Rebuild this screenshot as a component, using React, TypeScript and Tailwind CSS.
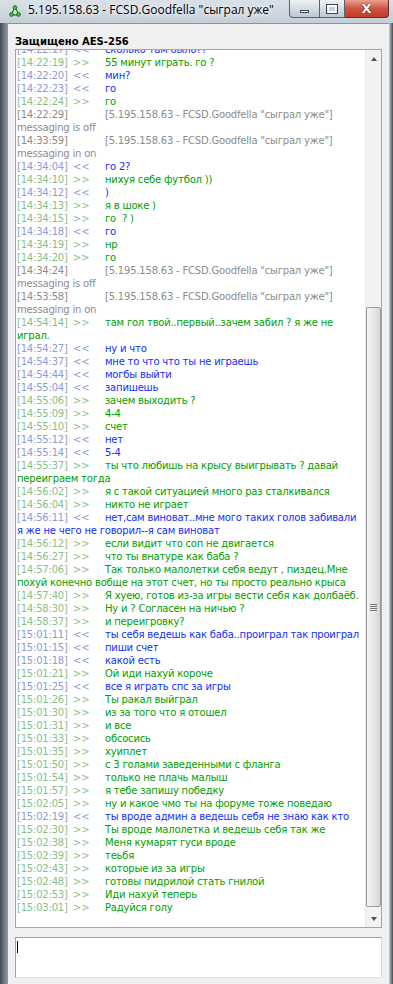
import React from 'react';

type Dir = 'in' | 'out' | 'sys';

interface Row {
  t: string;
  d: Dir;
  m: string;
  m2?: string;
}

const SYS = '[5.195.158.63 - FCSD.Goodfella "сыграл уже"]';

const rows: Row[] = [
  { t: '14:22:17', d: 'in', m: 'сколько там было??' },
  { t: '14:22:19', d: 'out', m: '55 минут играть. го ?' },
  { t: '14:22:20', d: 'in', m: 'мин?' },
  { t: '14:22:23', d: 'in', m: 'го' },
  { t: '14:22:24', d: 'out', m: 'го' },
  { t: '14:22:29', d: 'sys', m: SYS, m2: 'messaging is off' },
  { t: '14:33:59', d: 'sys', m: SYS, m2: 'messaging in on' },
  { t: '14:34:04', d: 'in', m: 'го 2?' },
  { t: '14:34:10', d: 'out', m: 'нихуя себе футбол ))' },
  { t: '14:34:12', d: 'in', m: ')' },
  { t: '14:34:13', d: 'out', m: 'я в шоке )' },
  { t: '14:34:15', d: 'out', m: 'го  ? )' },
  { t: '14:34:18', d: 'in', m: 'го' },
  { t: '14:34:19', d: 'out', m: 'нр' },
  { t: '14:34:20', d: 'out', m: 'го' },
  { t: '14:34:24', d: 'sys', m: SYS, m2: 'messaging is off' },
  { t: '14:53:58', d: 'sys', m: SYS, m2: 'messaging in on' },
  { t: '14:54:14', d: 'out', m: 'там гол твой..первый..зачем забил ? я же не', m2: 'играл.' },
  { t: '14:54:27', d: 'in', m: 'ну и что' },
  { t: '14:54:37', d: 'in', m: 'мне то что что ты не играешь' },
  { t: '14:54:44', d: 'in', m: 'могбы выйти' },
  { t: '14:55:04', d: 'in', m: 'запишешь' },
  { t: '14:55:06', d: 'out', m: 'зачем выходить ?' },
  { t: '14:55:09', d: 'out', m: '4-4' },
  { t: '14:55:10', d: 'out', m: 'счет' },
  { t: '14:55:12', d: 'in', m: 'нет' },
  { t: '14:55:14', d: 'in', m: '5-4' },
  { t: '14:55:37', d: 'out', m: 'ты что любишь на крысу выигрывать ? давай', m2: 'переиграем тогда' },
  { t: '14:56:02', d: 'out', m: 'я с такой ситуацией много раз сталкивался' },
  { t: '14:56:04', d: 'out', m: 'никто не играет' },
  { t: '14:56:11', d: 'in', m: 'нет,сам виноват..мне мого таких голов забивали', m2: 'я же не чего не говорил--я сам виноват' },
  { t: '14:56:12', d: 'out', m: 'если видит что соп не двигается' },
  { t: '14:56:27', d: 'out', m: 'что ты внатуре как баба ?' },
  { t: '14:57:06', d: 'out', m: 'Так только малолетки себя ведут , пиздец.Мне', m2: 'похуй конечно вобще на этот счет, но ты просто реально крыса' },
  { t: '14:57:40', d: 'out', m: 'Я хуею, готов из-за игры вести себя как долбаёб.' },
  { t: '14:58:30', d: 'out', m: 'Ну и ? Согласен на ничью ?' },
  { t: '14:58:37', d: 'out', m: 'и переигровку?' },
  { t: '15:01:11', d: 'in', m: 'ты себя ведешь как баба..проиграл так проиграл' },
  { t: '15:01:15', d: 'in', m: 'пиши счет' },
  { t: '15:01:18', d: 'in', m: 'какой есть' },
  { t: '15:01:21', d: 'out', m: 'Ой иди нахуй короче' },
  { t: '15:01:25', d: 'in', m: 'все я играть спс за игры' },
  { t: '15:01:26', d: 'out', m: 'Ты ракал выйграл' },
  { t: '15:01:30', d: 'out', m: 'из за того что я отошел' },
  { t: '15:01:31', d: 'out', m: 'и все' },
  { t: '15:01:33', d: 'out', m: 'обсосись' },
  { t: '15:01:35', d: 'out', m: 'хуиплет' },
  { t: '15:01:50', d: 'out', m: 'с 3 голами заведенными с фланга' },
  { t: '15:01:54', d: 'out', m: 'только не плачь малыш' },
  { t: '15:01:57', d: 'out', m: 'я тебе запишу победку' },
  { t: '15:02:05', d: 'out', m: 'ну и какое чмо ты на форуме тоже поведаю' },
  { t: '15:02:19', d: 'in', m: 'ты вроде админ а ведешь себя не знаю как кто' },
  { t: '15:02:30', d: 'out', m: 'Ты вроде малолетка и ведешь себя так же' },
  { t: '15:02:38', d: 'out', m: 'Меня кумарят гуси вроде' },
  { t: '15:02:39', d: 'out', m: 'теьбя' },
  { t: '15:02:43', d: 'out', m: 'которые из за игры' },
  { t: '15:02:48', d: 'out', m: 'готовы пидрилой стать гнилой' },
  { t: '15:02:53', d: 'out', m: 'Иди нахуй теперь' },
  { t: '15:03:01', d: 'out', m: 'Радуйся голу' },
];

function LogRow({ row }: { row: Row }) {
  if (row.d === 'sys') {
    return (
      <div className="text-[#8c8c8c]">
        <span className="inline-block w-[88px]">[{row.t}]</span>
        {row.m}
        {row.m2 && (
          <>
            <br />
            {row.m2}
          </>
        )}
      </div>
    );
  }
  const out = row.d === 'out';
  return (
    <div className={out ? 'text-[#00a000]' : 'text-[#1030ff]'}>
      <span className={'inline-block w-[56px] ' + (out ? 'text-[#88bf88]' : 'text-[#8e9cd2]')}>[{row.t}]</span>
      <span className={'inline-block w-[32px] ' + (out ? 'text-[#88bf88]' : 'text-[#8e9cd2]')}>
        {out ? '>>' : '<<'}
      </span>
      {row.m}
      {row.m2 && (
        <>
          <br />
          {row.m2}
        </>
      )}
    </div>
  );
}

function AppIcon() {
  return (
    <svg width="12" height="12" viewBox="0 0 12 12">
      <path d="M6 2 L2 10 L10 10 Z" fill="none" stroke="#2b3a2b" strokeWidth="1" />
      <circle cx="6" cy="2.5" r="2" fill="#22c322" stroke="#0b6d0b" strokeWidth="0.6" />
      <circle cx="2.5" cy="9.5" r="2" fill="#22c322" stroke="#0b6d0b" strokeWidth="0.6" />
      <circle cx="9.5" cy="9.5" r="2" fill="#22c322" stroke="#0b6d0b" strokeWidth="0.6" />
    </svg>
  );
}

function CaptionButtons() {
  return (
    <div className="flex h-[18px] self-start">
      <div className="w-[31px] h-full rounded-bl-[4px] border border-t-0 border-[#5b636c] bg-gradient-to-b from-[#eef2f6] via-[#d5dde5] to-[#bcc7d2] flex items-center justify-center">
        <div className="w-[9px] h-[3px] mt-[5px] bg-white border border-[#3c4650]" />
      </div>
      <div className="w-[25px] h-full border-b border-r border-[#5b636c] bg-gradient-to-b from-[#eef2f6] via-[#d5dde5] to-[#bcc7d2] flex items-center justify-center">
        <div className="w-[10px] h-[8px] border-[2px] border-white outline outline-1 outline-[#3c4650] bg-[#c6ced6]" />
      </div>
      <div className="w-[44px] h-full rounded-br-[4px] border-b border-r border-[#5b3030] bg-gradient-to-b from-[#e8a090] via-[#d0533f] to-[#c23a2a] flex items-center justify-center">
        <span className="text-white text-[13px] font-bold leading-none [text-shadow:0_0_1px_#3a1010,0_0_1px_#3a1010] font-['DejaVu_Sans',sans-serif]">
          X
        </span>
      </div>
    </div>
  );
}

function ScrollBar() {
  return (
    <div className="w-[16px] flex flex-col bg-[#f2f2f2] border-l border-[#e9e9e9]">
      <div className="h-[17px] flex items-center justify-center">
        <div className="w-0 h-0 border-l-[3.5px] border-r-[3.5px] border-b-[4px] border-l-transparent border-r-transparent border-b-[#505050]" />
      </div>
      <div className="flex-1 flex flex-col">
        <div className="h-[240px]" />
        <div className="h-[600px] rounded-[2px] border border-[#9a9a9a] bg-gradient-to-r from-[#f4f4f4] via-[#e8e8e8] to-[#d6d6d6] flex items-center justify-center">
          <div className="flex flex-col gap-[1px]">
            <div className="w-[7px] h-[1px] bg-[#7a7a7a]" />
            <div className="w-[7px] h-[1px] bg-[#7a7a7a]" />
            <div className="w-[7px] h-[1px] bg-[#7a7a7a]" />
            <div className="w-[7px] h-[1px] bg-[#7a7a7a]" />
          </div>
        </div>
      </div>
      <div className="h-[17px] flex items-center justify-center">
        <div className="w-0 h-0 border-l-[3.5px] border-r-[3.5px] border-t-[4px] border-l-transparent border-r-transparent border-t-[#505050]" />
      </div>
    </div>
  );
}

export default function App() {
  return (
    <div className="w-[393px] h-[984px] overflow-hidden flex flex-col bg-[#5d6974]">
      {/* title bar */}
      <div className="h-[23px] flex items-start bg-gradient-to-b from-[#d9e0e7] to-[#c4ced8]">
        <div className="pl-[9px] pt-[5px] flex items-center">
          <AppIcon />
        </div>
        <div className="pl-[7px] pt-[2px] flex-1 text-[12px] leading-[16px] text-black font-['Open_Sans',sans-serif] whitespace-nowrap [text-shadow:0_0_6px_#ffffff,0_0_6px_#ffffff]">
          5.195.158.63 - FCSD.Goodfella "сыграл уже"
        </div>
        <div className="pr-[4px]">
          <CaptionButtons />
        </div>
      </div>

      <div className="flex-1 flex">
        <div className="w-[7px] bg-gradient-to-r from-[#3f4a55] to-[#8b96a1]" />
        <div className="w-[382px] bg-[#f0f0f0] border-l border-t border-[#8a949e] flex flex-col px-[7px] font-['DejaVu_Sans',sans-serif]">
          <div className="h-[25px] pt-[12px] text-[10px] leading-[12px] font-bold text-black">
            Защищено AES-256
          </div>
          <div className="h-[879px] border border-[#a5a5a5] bg-white flex">
            <div className="flex-1 overflow-hidden pl-[1px]">
              <div className="-mt-[7px] text-[10px] leading-[13px] tracking-[-0.2px] whitespace-pre">
                {rows.map((r, i) => (
                  <LogRow key={i} row={r} />
                ))}
              </div>
            </div>
            <ScrollBar />
          </div>
          <div className="mt-[9px] h-[41px] bg-white border border-[#a0a0a0] border-r-[#dadada] border-b-[#e3e3e3]">
            <div className="ml-[1px] mt-[3px] w-[1px] h-[12px] bg-black" />
          </div>
        </div>
        <div className="w-[4px] bg-gradient-to-r from-[#c8d0d8] to-[#3f4a55]" />
      </div>
    </div>
  );
}
